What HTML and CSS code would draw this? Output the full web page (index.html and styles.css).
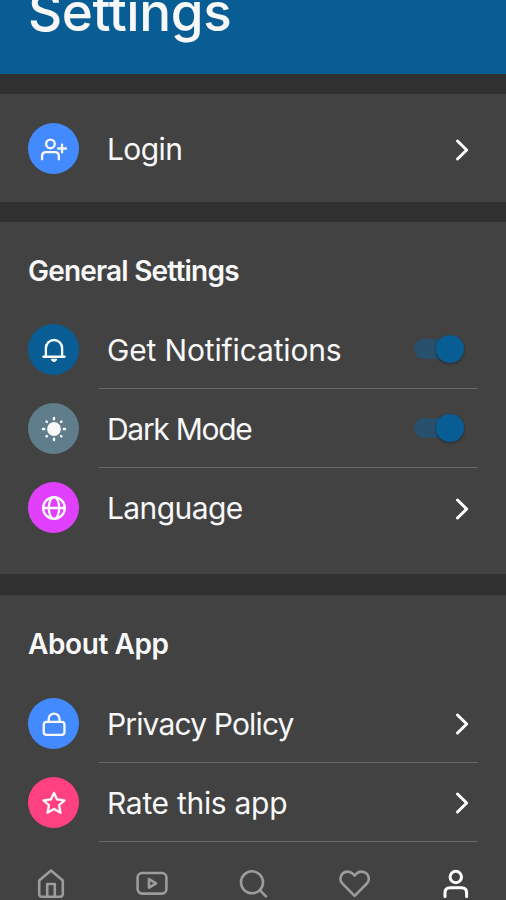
FILE: index.html
```html
<!DOCTYPE html>
<html lang="en">
<head>
<meta charset="utf-8">
<title>Settings</title>
<link rel="stylesheet" href="styles.css">
</head>
<body>
<div class="app">
  <header class="header"><h1 class="title">Settings</h1></header>

  <section class="section section-login">
    <div class="row">
      <span class="badge blue"><svg viewBox="0 0 30 30"><circle cx="11.2" cy="9.6" r="4.6"/><path d="M2.200 26v-3.200q0-4.400 4.400-4.400h9.200q4.400 0 4.400 4.400V26M23.600 10.300v8.400M19.400 14.500h8.400"/></svg></span>
      <span class="label login">Login</span>
      <svg class="chevron" viewBox="0 0 16 24"><path d="M2.500 3l9.200 9-9.200 9"/></svg>
    </div>
  </section>

  <section class="section section-general">
    <h2 class="heading general">General Settings</h2>
    <div class="row">
      <span class="badge navy"><svg viewBox="0 0 30 30"><path d="M3.600 22.200h22.800M6.300 22v-9a8.700 8.700 0 0 1 17.400 0v9"/><path class="solid" d="M11.500 24.500h7c-.7 4.500-6.300 4.500-7 0z"/></svg></span>
      <div class="body line"><span class="label notifications">Get Notifications</span><span class="switch"></span></div>
    </div>
    <div class="row">
      <span class="badge slate"><svg viewBox="0 0 30 30"><circle class="solid" cx="15" cy="15" r="7.400"/><path class="rays" d="M15 3.200v1.300M15 25.500v1.300M3.200 15h1.300M25.500 15h1.300M7 7l.5.500M22.500 22.500l.5.500M7 23l.5-.5M22.500 7.500l.5-.5"/></svg></span>
      <div class="body line"><span class="label dark">Dark Mode</span><span class="switch"></span></div>
    </div>
    <div class="row">
      <span class="badge magenta"><svg viewBox="0 0 30 30"><circle cx="15" cy="15" r="11.600"/><ellipse cx="15" cy="15" rx="5.600" ry="11.600"/><path d="M3.400 15h23.200"/></svg></span>
      <span class="label language">Language</span>
      <svg class="chevron" viewBox="0 0 16 24"><path d="M2.500 3l9.200 9-9.200 9"/></svg>
    </div>
  </section>

  <section class="section section-about">
    <h2 class="heading about">About App</h2>
    <div class="row">
      <span class="badge blue"><svg viewBox="0 0 30 30"><rect x="4" y="12.800" width="22.200" height="13.800" rx="3"/><path d="M9.300 12.500V9.600a5.800 5.800 0 0 1 11.600 0v2.900"/></svg></span>
      <div class="body line"><span class="label privacy">Privacy Policy</span><svg class="chevron" viewBox="0 0 16 24"><path d="M2.500 3l9.200 9-9.200 9"/></svg></div>
    </div>
    <div class="row">
      <span class="badge pink"><svg viewBox="0 0 30 30"><path d="M15 4.200l3.300 7 7.900.9-5.800 5.300 1.600 7.900-7-3.900-7 3.900 1.600-7.900-5.800-5.300 7.900-.9z"/></svg></span>
      <div class="body line"><span class="label rate">Rate this app</span><svg class="chevron" viewBox="0 0 16 24"><path d="M2.500 3l9.200 9-9.200 9"/></svg></div>
    </div>
  </section>

  <nav class="nav">
    <a class="tab"><svg viewBox="0 0 32 32"><path d="M4.200 12.500L16 2.500l11.800 10V26a2.800 2.800 0 0 1-2.800 2.800H7A2.800 2.800 0 0 1 4.200 26zM12.200 28.800V16h7.600v12.800"/></svg></a>
    <a class="tab"><svg viewBox="0 0 32 32"><rect x="1.600" y="5" width="28.800" height="20.600" rx="4.500"/><path d="M13 11l7 4.300-7 4.300z"/></svg></a>
    <a class="tab"><svg viewBox="0 0 32 32"><circle cx="15" cy="14.300" r="11"/><path d="M22.800 22.100l6.200 6.200"/></svg></a>
    <a class="tab"><svg viewBox="0 0 32 32"><path d="M16.600 27.800L4.500 15.700a7 7 0 0 1 0-10 7.200 7.200 0 0 1 10.200 0l1.900 1.900 1.900-1.900a7.200 7.200 0 0 1 10.200 0 7 7 0 0 1 0 10z"/></svg></a>
    <a class="tab active"><svg viewBox="0 0 32 32"><circle cx="16.800" cy="9" r="5.700"/><path d="M6 28.500v-3.700q0-5 5-5h11.600q5 0 5 5v3.700"/></svg></a>
  </nav>
</div>
</body>
</html>
```
FILE: styles.css
```css
* { box-sizing: border-box; }
body {
  margin: 0;
  background: #303030;
  color: #f8f8f8;
  font-family: Inter, "Liberation Sans", sans-serif;
}
.app {
  height: 900px;
  display: flex;
  flex-direction: column;
  overflow: hidden;
}
svg { fill: none; stroke: currentColor; stroke-width: 2.5; stroke-linecap: round; stroke-linejoin: round; }
.header {
  height: 73.5px;
  flex: none;
  background: #085d95;
  display: flex;
  align-items: flex-end;
  padding: 0 28px 31px;
}
.title { margin: 0; font-size: 53px; line-height: 62px; font-weight: 450; letter-spacing: -0.4px; white-space: nowrap; }
.section { flex: none; background: #424242; padding: 0 28px; margin-top: 20.5px; }
.section-login { height: 108px; padding-top: 15px; }
.section-general { height: 352px; margin-top: 20px; }
.section-about { height: 247px; margin-top: 21px; }
.heading { margin: 0; font-size: 28px; line-height: 34px; font-weight: 600; white-space: nowrap; padding: 32px 0 22px; }
.heading.general { letter-spacing: -0.8px; }
.heading.about { letter-spacing: -0.4px; padding-bottom: 23px; }
.row { height: 79px; display: flex; align-items: center; }
.badge {
  width: 51px;
  height: 51px;
  margin-left: 0.4px;
  margin-right: 27.6px;
  border-radius: 50%;
  flex: none;
  display: flex;
  align-items: center;
  justify-content: center;
}
.badge svg { width: 28px; height: 28px; }
.badge .solid { fill: currentColor; stroke: none; }
.badge .rays { stroke-width: 2.6; }
.blue { background: #448aff; }
.navy { background: #085d95; }
.slate { background: #607d8b; }
.magenta { background: #e040fb; }
.pink { background: #ff4081; }
.body {
  flex: 1;
  height: 79px;
  margin-left: -8px;
  padding-left: 8px;
  display: flex;
  align-items: center;
}
.line { border-bottom: 1.5px solid #686868; }
.label { flex: 1; font-size: 30px; line-height: 40px; white-space: nowrap; padding-top: 2px; }
.login { letter-spacing: -0.6px; padding-top: 0; }
.notifications { letter-spacing: -0.15px; }
.dark { letter-spacing: -1.3px; }
.language { letter-spacing: -0.6px; padding-top: 0; }
.privacy { letter-spacing: -0.85px; }
.rate { letter-spacing: -0.3px; }
.chevron { width: 16px; height: 24px; margin: 2px 7px 0 0; color: #fff; stroke-width: 3; }
.switch {
  width: 50px;
  height: 28px;
  margin-right: 14px;
  display: flex;
  justify-content: flex-end;
  align-items: center;
  position: relative;
}
.switch::before {
  content: "";
  position: absolute;
  left: 0;
  top: 4px;
  width: 44px;
  height: 20px;
  border-radius: 10px;
  background: #27506d;
}
.switch::after {
  content: "";
  position: relative;
  width: 28px;
  height: 28px;
  border-radius: 50%;
  background: #085d95;
  box-shadow: 0 1px 3px rgba(0, 0, 0, .4);
}
.nav { flex: 1; background: #424242; display: flex; padding: 26px 0 0; }
.tab { flex: 1; text-align: center; color: #9c9c9c; }
.tab svg { width: 32px; height: 32px; stroke-width: 2.6; }
.tab.active { color: #fff; }
.tab.active svg { stroke-width: 3; }
```
